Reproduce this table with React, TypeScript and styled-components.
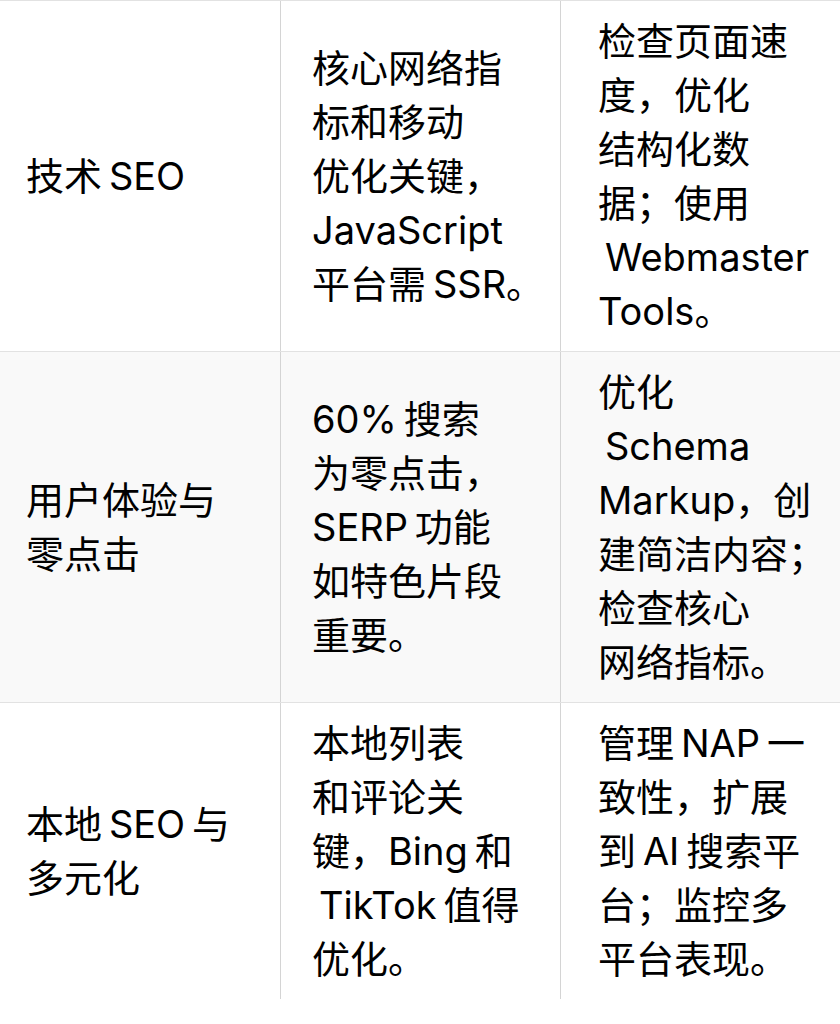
import React from 'react';
import styled, { createGlobalStyle } from 'styled-components';

const GlobalStyle = createGlobalStyle`
  html, body {
    margin: 0;
    padding: 0;
    background: #ffffff;
  }
  body {
    font-family: Inter, "Noto Sans CJK SC", sans-serif;
    color: #000;
  }
`;

interface RowData {
  topic: string[];
  trend: string[];
  action: string[];
}

// thin space between CJK and latin, like the autospacing in the shot
const t = '\u2009';

// each line is kept as in the screenshot so the wraps land in the same spots
const rows: RowData[] = [
  {
    topic: [`技术${t}SEO`],
    trend: ['核心网络指', '标和移动', '优化关键，', 'JavaScript', `平台需${t}SSR。`],
    action: ['检查页面速', '度，优化', '结构化数', '据；使用', `${t}Webmaster`, 'Tools。'],
  },
  {
    topic: ['用户体验与', '零点击'],
    trend: [`60%${t}搜索`, '为零点击，', `SERP${t}功能`, '如特色片段', '重要。'],
    action: ['优化', `${t}Schema`, 'Markup，创', '建简洁内容；', '检查核心', '网络指标。'],
  },
  {
    topic: [`本地${t}SEO${t}与`, '多元化'],
    trend: ['本地列表', '和评论关', `键，Bing${t}和`, `${t}TikTok${t}值得`, '优化。'],
    action: [`管理${t}NAP${t}一`, '致性，扩展', `到${t}AI${t}搜索平`, '台；监控多', '平台表现。'],
  },
];

const App = () => {
  return (
    <>
      <GlobalStyle />
      <Table>
        {rows.map((row, i) => (
          <Row key={i} $shaded={i === 1}>
            <Cell $col={0}>
              {row.topic.map((l, j) => <Line key={j}>{l}</Line>)}
            </Cell>
            <Cell $col={1}>
              {row.trend.map((l, j) => <Line key={j}>{l}</Line>)}
            </Cell>
            <Cell $col={2}>
              {row.action.map((l, j) => <Line key={j}>{l}</Line>)}
            </Cell>
          </Row>
        ))}
      </Table>
    </>
  );
};

export default App;

const Table = styled.div`
  width: 840px;
  display: flex;
  flex-direction: column;
  overflow: hidden;
`;

const Row = styled.div<{ $shaded?: boolean }>`
  display: grid;
  grid-template-columns: 280px 280px 1fr;
  border-top: 1px solid #e2e2e2;
  background: ${(p) => (p.$shaded ? '#f9f9f9' : '#ffffff')};
`;

const padLeft = [26, 31, 37];

const Cell = styled.div<{ $col: number }>`
  display: flex;
  flex-direction: column;
  justify-content: center;
  padding: 13px 0 13px ${(p) => padLeft[p.$col]}px;
  border-left: ${(p) => (p.$col === 0 ? 'none' : '1px solid #d4d4d4')};
  font-size: 38px;
  line-height: 54px;
`;

const Line = styled.span`
  display: block;
  white-space: pre;
`;
